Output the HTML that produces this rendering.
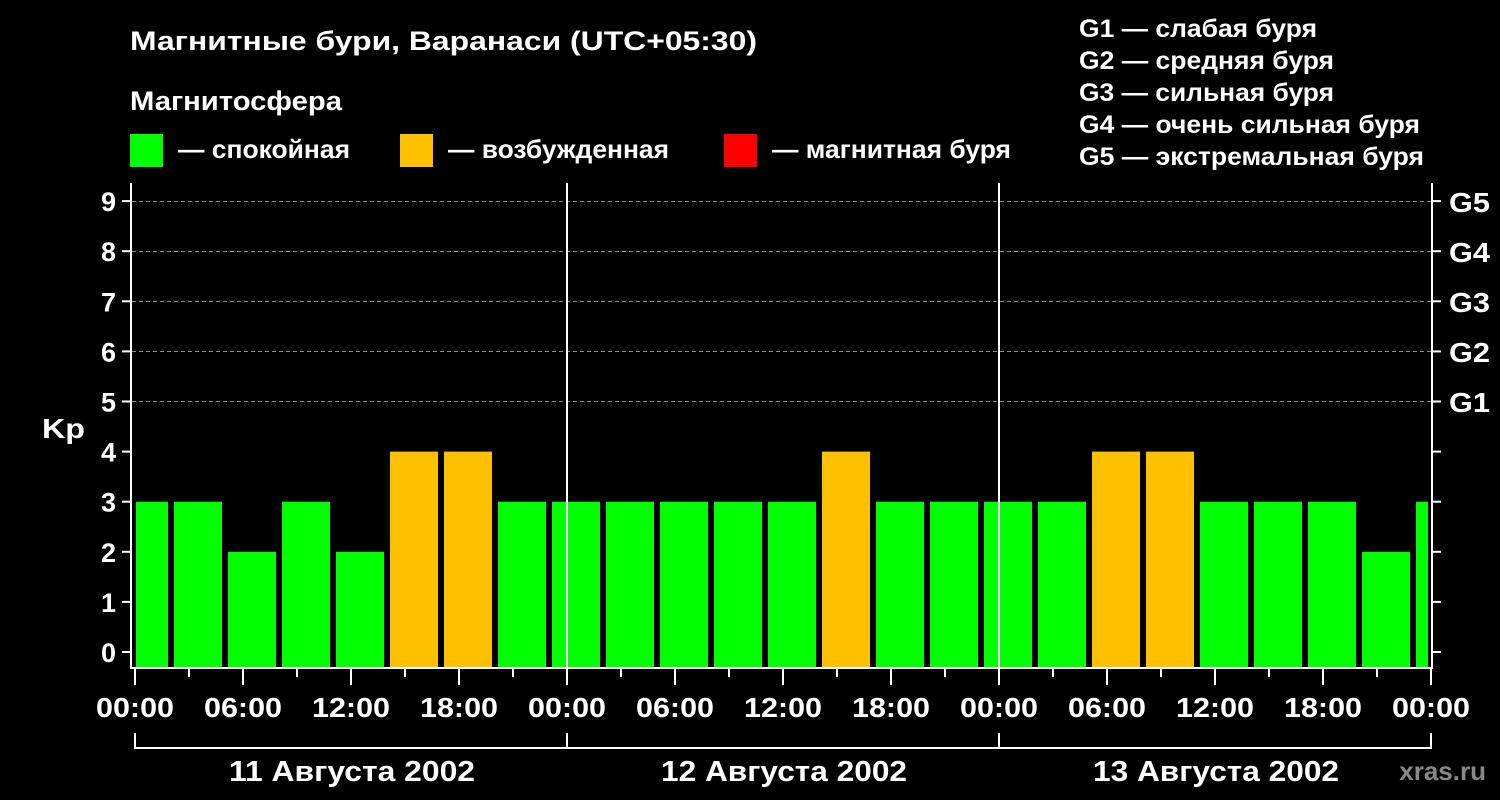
<!DOCTYPE html>
<html><head><meta charset="utf-8"><style>
html,body{margin:0;padding:0;background:#000;}
svg{display:block;font-family:"Liberation Sans",sans-serif;font-weight:bold;}
</style></head><body>
<svg width="1500" height="800" xmlns="http://www.w3.org/2000/svg">
<rect width="1500" height="800" fill="#000"/>
<g fill="#fff" font-size="27" lengthAdjust="spacingAndGlyphs">
<text x="130" y="50" textLength="627" lengthAdjust="spacingAndGlyphs">Магнитные бури, Варанаси (UTC+05:30)</text>
<text x="130" y="110" textLength="212" lengthAdjust="spacingAndGlyphs">Магнитосфера</text>
<text x="178" y="158" font-size="26" textLength="172" lengthAdjust="spacingAndGlyphs">— спокойная</text>
<text x="448" y="158" font-size="26" textLength="221" lengthAdjust="spacingAndGlyphs">— возбужденная</text>
<text x="772" y="158" font-size="26" textLength="239" lengthAdjust="spacingAndGlyphs">— магнитная буря</text>
</g>
<rect x="130" y="134" width="33" height="33" fill="#00ff00"/>
<rect x="400" y="134" width="33" height="33" fill="#ffc000"/>
<rect x="724" y="134" width="33" height="33" fill="#ff0000"/>
<g fill="#fff" font-size="25">
<text x="1079" y="37" textLength="238" lengthAdjust="spacingAndGlyphs">G1 — слабая буря</text>
<text x="1079" y="69" textLength="255" lengthAdjust="spacingAndGlyphs">G2 — средняя буря</text>
<text x="1079" y="101" textLength="255" lengthAdjust="spacingAndGlyphs">G3 — сильная буря</text>
<text x="1079" y="133" textLength="341" lengthAdjust="spacingAndGlyphs">G4 — очень сильная буря</text>
<text x="1079" y="165" textLength="345" lengthAdjust="spacingAndGlyphs">G5 — экстремальная буря</text>
</g>
<g stroke="#888" stroke-dasharray="4,3" stroke-width="1">
<line x1="132" x2="1432" y1="201.5" y2="201.5"/>
<line x1="132" x2="1432" y1="251.5" y2="251.5"/>
<line x1="132" x2="1432" y1="301.5" y2="301.5"/>
<line x1="132" x2="1432" y1="351.5" y2="351.5"/>
<line x1="132" x2="1432" y1="401.5" y2="401.5"/>
</g>
<g id="bars"></g>
<g stroke="#fff" stroke-width="2" fill="none">
<line x1="131" y1="183" x2="131" y2="669"/>
<line x1="1432" y1="183" x2="1432" y2="669"/>
<line x1="130" y1="668" x2="1433" y2="668"/>
<line x1="567" y1="183" x2="567" y2="668"/>
<line x1="999" y1="183" x2="999" y2="668"/>
<path d="M135 733V748H1431V733M567 733V748M999 733V748"/>
</g>
<g id="ticks" stroke="#fff" stroke-width="2"></g>
<g fill="#fff" font-size="27" text-anchor="end" id="ylab"></g>
<g fill="#fff" font-size="28">
<text x="1449" y="212" textLength="41" lengthAdjust="spacingAndGlyphs">G5</text>
<text x="1449" y="262" textLength="41" lengthAdjust="spacingAndGlyphs">G4</text>
<text x="1449" y="312" textLength="41" lengthAdjust="spacingAndGlyphs">G3</text>
<text x="1449" y="362" textLength="41" lengthAdjust="spacingAndGlyphs">G2</text>
<text x="1449" y="412" textLength="41" lengthAdjust="spacingAndGlyphs">G1</text>
<text x="42" y="438" textLength="43" lengthAdjust="spacingAndGlyphs">Kp</text>
</g>
<g fill="#fff" font-size="28" text-anchor="middle" id="xlab"></g>
<g fill="#fff" font-size="29" text-anchor="middle">
<text x="352" y="781" textLength="246" lengthAdjust="spacingAndGlyphs">11 Августа 2002</text>
<text x="784" y="781" textLength="246" lengthAdjust="spacingAndGlyphs">12 Августа 2002</text>
<text x="1216" y="781" textLength="246" lengthAdjust="spacingAndGlyphs">13 Августа 2002</text>
</g>
<text x="1486" y="780" fill="#888" font-size="26" text-anchor="end">xras.ru</text>
<script>
var ns="http://www.w3.org/2000/svg";
function el(p,t,a,txt){var e=document.createElementNS(ns,t);for(var k in a)e.setAttribute(k,a[k]);if(txt)e.textContent=txt;document.getElementById(p).appendChild(e);}
var v=[3,3,2,3,2,4,4,3,3,3,3,3,3,4,3,3,3,3,4,4,3,3,3,2,3];
v.forEach(function(k,i){var x0=Math.max(136,120+54*i),x1=Math.min(1428,168+54*i);var y=652-50.1*k;
el("bars","rect",{x:x0,y:y,width:x1-x0,height:667-y,fill:k>=4?"#ffc000":"#00ff00"});});
for(var k=0;k<=9;k++){var y=652-50.1*k;
el("ticks","line",{x1:122,x2:131,y1:y,y2:y});el("ticks","line",{x1:1432,x2:1441,y1:y,y2:y});
el("ylab","text",{x:116,y:y+10},String(k));}
var labs=["00:00","06:00","12:00","18:00"];
for(var i=0;i<=24;i++){var x=135+54*i;var h=(i%2==0)?16:8;
el("ticks","line",{x1:x,x2:x,y1:669,y2:669+h});
if(i%2==0)el("xlab","text",{x:x,y:717,textLength:78,lengthAdjust:"spacingAndGlyphs"},i==24?"00:00":labs[(i/2)%4]);}
</script>
</svg>
</body></html>
